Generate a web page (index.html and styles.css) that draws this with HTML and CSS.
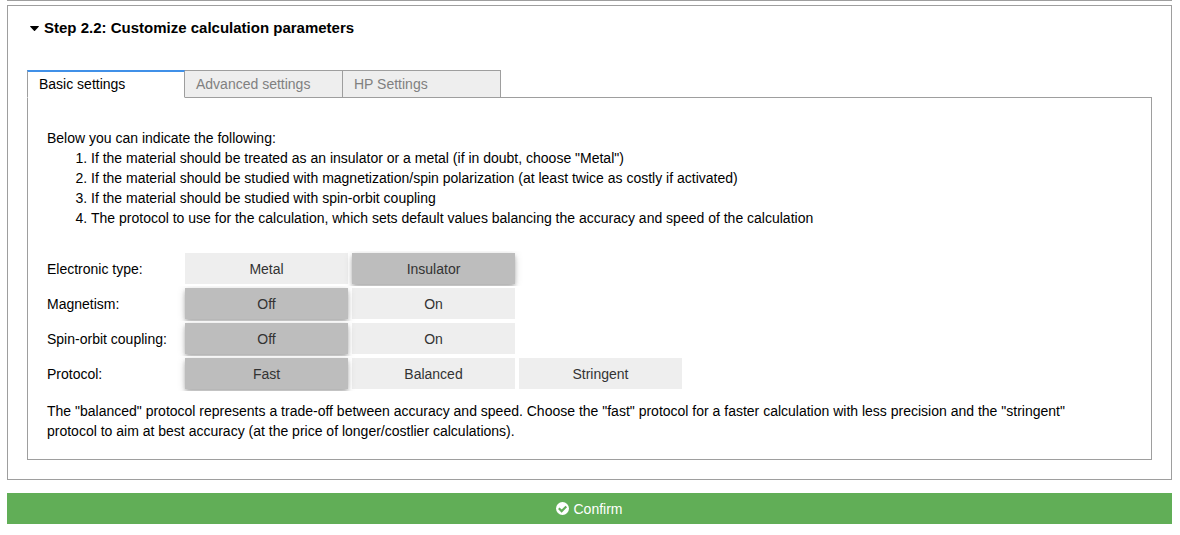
FILE: index.html
```html
<!DOCTYPE html>
<html lang="en">
<head>
<meta charset="utf-8">
<title>Step 2.2: Customize calculation parameters</title>
<link rel="stylesheet" href="styles.css">
</head>
<body>
<main class="page">
  <section class="step">
    <h2 class="step-title">
      <button class="step-toggle" type="button" aria-expanded="true">
        <svg class="caret" viewBox="0 0 9 5" aria-hidden="true"><path d="M0.6 0H8.4Q9.3 0.1 8.7 0.8L5 4.7Q4.5 5.1 4 4.7L0.3 0.8Q-0.3 0.1 0.6 0Z"/></svg>
        <span>Step 2.2: Customize calculation parameters</span>
      </button>
    </h2>
    <div class="tabs" role="tablist">
      <button class="tab tab-active" type="button" role="tab" aria-selected="true">Basic settings</button>
      <button class="tab" type="button" role="tab" aria-selected="false">Advanced settings</button>
      <button class="tab" type="button" role="tab" aria-selected="false">HP Settings</button>
    </div>
    <div class="tab-panel" role="tabpanel">
      <p class="text">Below you can indicate the following:</p>
      <ol class="hints">
        <li>If the material should be treated as an insulator or a metal (if in doubt, choose "Metal")</li>
        <li>If the material should be studied with magnetization/spin polarization (at least twice as costly if activated)</li>
        <li>If the material should be studied with spin-orbit coupling</li>
        <li>The protocol to use for the calculation, which sets default values balancing the accuracy and speed of the calculation</li>
      </ol>
      <div class="options">
        <div class="option" role="group" aria-labelledby="electronic">
          <span class="option-label" id="electronic">Electronic type:</span>
          <button class="toggle" type="button" aria-pressed="false">Metal</button>
          <button class="toggle toggle-on" type="button" aria-pressed="true">Insulator</button>
        </div>
        <div class="option" role="group" aria-labelledby="magnetism">
          <span class="option-label" id="magnetism">Magnetism:</span>
          <button class="toggle toggle-on" type="button" aria-pressed="true">Off</button>
          <button class="toggle" type="button" aria-pressed="false">On</button>
        </div>
        <div class="option" role="group" aria-labelledby="spin">
          <span class="option-label" id="spin">Spin-orbit coupling:</span>
          <button class="toggle toggle-on" type="button" aria-pressed="true">Off</button>
          <button class="toggle" type="button" aria-pressed="false">On</button>
        </div>
        <div class="option" role="group" aria-labelledby="protocol">
          <span class="option-label" id="protocol">Protocol:</span>
          <button class="toggle toggle-on" type="button" aria-pressed="true">Fast</button>
          <button class="toggle" type="button" aria-pressed="false">Balanced</button>
          <button class="toggle" type="button" aria-pressed="false">Stringent</button>
        </div>
      </div>
      <p class="text note">The "balanced" protocol represents a trade-off between accuracy and speed. Choose the "fast" protocol for a faster calculation with less precision and the "stringent" protocol to aim at best accuracy (at the price of longer/costlier calculations).</p>
    </div>
  </section>
  <button class="confirm" type="button">
    <svg class="check" viewBox="0 0 12 12" aria-hidden="true"><circle cx="6" cy="6" r="6" fill="#fff"/><path d="M2.6 5.8L5.2 8.4L9.5 4.1" fill="none" stroke="#61ae57" stroke-width="2"/></svg>
    <span>Confirm</span>
  </button>
</main>
</body>
</html>
```
FILE: styles.css
```css
* {
  box-sizing: border-box;
}

body {
  margin: 0;
  background: #fff;
  color: #000;
  font: 14px/20px "Liberation Sans", Arial, sans-serif;
}

button {
  margin: 0;
  border: 0;
  font: inherit;
  cursor: pointer;
}

.page {
  margin: 0 8px 0 7px;
  border-top: 1px solid #9e9e9e;
  padding-top: 4px;
}

.step {
  border: 1px solid #9e9e9e;
  padding: 12px 19px 19px;
}

.step-title {
  margin: 0 0 32px;
  font-size: 15px;
  line-height: 20px;
}

.step-toggle {
  display: flex;
  align-items: center;
  gap: 5px;
  padding: 0 3px;
  background: none;
  color: #000;
}

.caret {
  width: 9px;
  height: 5px;
}

.tabs {
  display: flex;
  margin-bottom: -1px;
}

.tab {
  width: 159px;
  height: 28px;
  margin-right: -1px;
  border: 1px solid #9e9e9e;
  padding: 0 11px;
  background: #eee;
  color: #808080;
  text-align: left;
}

.tab-active {
  width: 158px;
  border-top: 2px solid #4090e8;
  border-bottom-color: #fff;
  padding-bottom: 1px;
  background: #fff;
  color: #000;
  z-index: 1;
}

.tab-panel {
  border: 1px solid #9e9e9e;
  padding: 30px 19px 18px;
}

.text,
.hints {
  margin: 0;
}

.note {
  padding-right: 40px;
}

.hints {
  padding-left: 44px;
}

.options {
  display: flex;
  flex-direction: column;
  gap: 4px;
  margin: 25px 0 12px;
}

.option {
  display: flex;
  align-items: center;
  gap: 4px;
}

.option-label {
  width: 134px;
}

.toggle {
  width: 163px;
  height: 31px;
  padding: 0;
  background: #eee;
  color: #333;
}

.toggle-on {
  background: #bdbdbd;
  box-shadow: 0 2px 4px -1px rgba(0, 0, 0, 0.2), 0 4px 5px 0 rgba(0, 0, 0, 0.14), 0 1px 10px 0 rgba(0, 0, 0, 0.12);
  clip-path: inset(-2px -12px);
}

.confirm {
  display: flex;
  align-items: center;
  justify-content: center;
  gap: 4px;
  width: 100%;
  height: 31px;
  margin-top: 13px;
  background: #61ae57;
  color: #fff;
}

.check {
  width: 13px;
  height: 13px;
}
```
